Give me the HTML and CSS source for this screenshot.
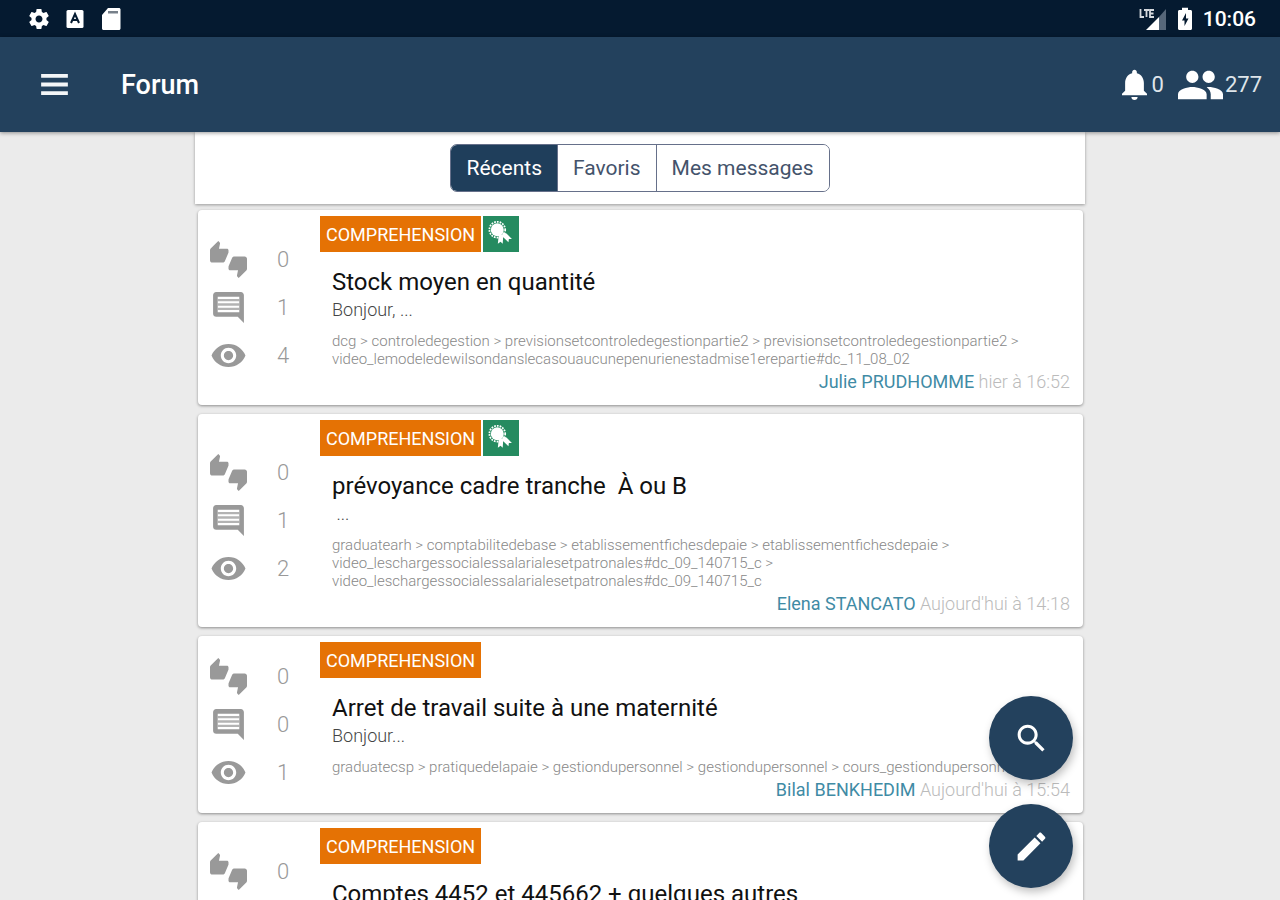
FILE: index.html
```html
<!DOCTYPE html>
<html lang="fr">
<head>
<meta charset="utf-8">
<meta name="viewport" content="width=device-width, initial-scale=1">
<title>Forum</title>
<link rel="stylesheet" href="styles.css">
</head>
<body>
<svg class="sprite" aria-hidden="true">
  <symbol id="thumbs" viewBox="0 0 24 24"><path d="M12 6c0-.55-.45-1-1-1H5.820l.66-3.180.02-.23c0-.31-.13-.59-.33-.8L5.380 0 .44 4.940C.17 5.210 0 5.590 0 6v6.500c0 .83.67 1.500 1.500 1.500h6.750c.62 0 1.150-.38 1.380-.91l2.260-5.290c.07-.17.11-.36.11-.55V6zm10.500 4h-6.750c-.62 0-1.150.38-1.380.91l-2.260 5.290c-.07.17-.11.36-.11.55V18c0 .55.45 1 1 1h5.180l-.66 3.180-.02.24c0 .31.13.59.33.8l.79.78 4.940-4.940c.27-.27.44-.65.44-1.060v-6.500c0-.83-.67-1.500-1.500-1.500z"/></symbol>
  <symbol id="comment" viewBox="0 0 24 24"><path d="M21.990 4c0-1.100-.89-2-1.990-2H4c-1.100 0-2 .9-2 2v12c0 1.100.9 2 2 2h14l4 4-.01-18zM19 15H5V5h14z"/><path d="M5 6.500h14v1.500H5zM5 9.300h14v1.500H5zM5 12.100h14v1.500H5z" opacity=".75"/></symbol>
  <symbol id="eye" viewBox="0 0 24 24"><path d="M12 4.500C7 4.500 2.730 7.610 1 12c1.730 4.390 6 7.500 11 7.500s9.270-3.110 11-7.500c-1.730-4.390-6-7.500-11-7.500zM12 17c-2.760 0-5-2.240-5-5s2.240-5 5-5 5 2.240 5 5-2.240 5-5 5zm0-8c-1.660 0-3 1.340-3 3s1.340 3 3 3 3-1.340 3-3-1.340-3-3-3z"/></symbol>
  <symbol id="rosette" viewBox="0 0 24 24"><path d="M11 12.500l4 1.500-.5 8-2-2-2.500 2zM14 11l4 1.500 5 5-2.800.1-.4 2.900-5.300-5z"/><circle cx="9.500" cy="9" r="6"/><circle cx="9.500" cy="9" r="7.300" fill="none" stroke="#fff" stroke-width="1.600" stroke-dasharray="1.600 1"/></symbol>
</svg>
<div class="app">
  <div class="status">
    <div class="status-group">
      <svg class="icon-status" viewBox="0 0 24 24"><path d="M19.430 12.980c.04-.32.07-.64.07-.98s-.03-.66-.07-.98l2.110-1.650c.19-.15.24-.42.12-.64l-2-3.460c-.12-.22-.39-.3-.61-.22l-2.490 1c-.52-.4-1.080-.73-1.690-.98l-.38-2.650C14.460 2.180 14.250 2 14 2h-4c-.25 0-.46.18-.49.42l-.38 2.650c-.61.25-1.170.59-1.690.98l-2.490-1c-.23-.09-.49 0-.61.22l-2 3.460c-.13.22-.07.49.12.64l2.110 1.650c-.04.32-.07.65-.07.98s.03.66.07.98l-2.110 1.650c-.19.15-.24.42-.12.64l2 3.460c.12.22.39.3.61.22l2.490-1c.52.4 1.080.73 1.690.98l.38 2.650c.03.24.24.42.49.42h4c.25 0 .46-.18.49-.42l.38-2.650c.61-.25 1.170-.59 1.690-.98l2.490 1c.23.09.49 0 .61-.22l2-3.460c.12-.22.07-.49-.12-.64l-2.110-1.650zM12 15.500c-1.930 0-3.500-1.570-3.500-3.500s1.570-3.500 3.500-3.500 3.500 1.570 3.500 3.500-1.570 3.500-3.500 3.500z"/></svg>
      <svg class="icon-status" viewBox="0 0 24 24"><rect x="3.500" y="3" width="17" height="18" rx="1.500"/><path d="M8 16l4-9 4 9M9.500 13h5" fill="none" stroke="#051a30" stroke-width="2"/></svg>
      <svg class="icon-status" viewBox="0 0 24 24"><path d="M20 1H9L3 8v13.500c0 .8.700 1.500 1.500 1.500H20c.8 0 1.500-.7 1.500-1.500v-19C21.500 1.700 20.800 1 20 1z"/><path d="M9 4h10v2.500H9z" fill="#77808a"/></svg>
    </div>
    <div class="status-group status-right">
      <svg class="icon-signal" viewBox="0 0 28 24"><path d="M7 23L20 10v13z"/><path d="M20 10l7-8v21h-7z" fill="#56677a"/><path d="M1.500 2v8H5M5 3h5M7.500 3v7M15 3h-4v7h4M11 6.500h3.500" fill="none" stroke="#d5d9de" stroke-width="1.800"/></svg>
      <svg class="icon-status" viewBox="0 0 24 24"><path d="M17.500 3H15V.8H9V3H6.500C5.600 3 5 3.700 5 4.500v17c0 .8.600 1.500 1.500 1.500h11c.9 0 1.500-.7 1.500-1.500v-17c0-.8-.6-1.500-1.500-1.500z"/><path d="M13 6l-4 7.500h2.500V19l4-7.500H13z" fill="#051a30"/></svg>
      <span class="clock">10:06</span>
    </div>
  </div>
  <header class="appbar">
    <button class="menu" type="button" aria-label="Menu"><svg viewBox="0 0 28 22"><path d="M0 0h28v4H0zM0 9h28v4H0zM0 18h28v4H0z"/></svg></button>
    <h1 class="title">Forum</h1>
    <button class="counter alerts" type="button" aria-label="Notifications"><svg class="icon-bell" viewBox="4 2 16 20" preserveAspectRatio="none"><path d="M12 22c1.100 0 2-.9 2-2h-4c0 1.100.89 2 2 2zm6-6v-5c0-3.070-1.640-5.640-4.500-6.320V4c0-.83-.67-1.500-1.500-1.500s-1.500.67-1.500 1.500v.68C7.630 5.360 6 7.920 6 11v5l-2 2v1h16v-1l-2-2z"/></svg><span>0</span></button>
    <button class="counter" type="button" aria-label="Membres"><svg class="icon-group" viewBox="1 5 22 14"><path d="M16 11c1.660 0 2.990-1.340 2.990-3S17.660 5 16 5c-1.660 0-3 1.340-3 3s1.340 3 3 3zm-8 0c1.660 0 2.990-1.340 2.990-3S9.660 5 8 5C6.340 5 5 6.340 5 8s1.340 3 3 3zm0 2c-2.330 0-7 1.170-7 3.500V19h14v-2.500c0-2.330-4.670-3.500-7-3.500zm8 0c-.29 0-.62.02-.97.05 1.160.84 1.970 1.970 1.970 3.450V19h6v-2.500c0-2.330-4.670-3.500-7-3.500z"/></svg><span>277</span></button>
  </header>
  <main class="content">
    <div class="column">
      <nav class="filters">
        <div class="segments">
          <button class="segment active" type="button">Récents</button>
          <button class="segment" type="button">Favoris</button>
          <button class="segment" type="button">Mes messages</button>
        </div>
      </nav>
      <div class="cards">
        <article class="card">
          <ul class="stats">
            <li><svg class="icon-stat"><use href="#thumbs"/></svg><span>0</span></li>
            <li><svg class="icon-stat"><use href="#comment"/></svg><span>1</span></li>
            <li><svg class="icon-stat"><use href="#eye"/></svg><span>4</span></li>
          </ul>
          <div class="post">
            <div class="tags"><span class="tag">COMPREHENSION</span><span class="badge"><svg><use href="#rosette"/></svg></span></div>
            <h2 class="subject">Stock moyen en quantité</h2>
            <p class="excerpt">Bonjour, ...</p>
            <p class="path">dcg &gt; controledegestion &gt; previsionsetcontroledegestionpartie2 &gt; previsionsetcontroledegestionpartie2 &gt; video_lemodeledewilsondanslecasouaucunepenurienestadmise1erepartie#dc_11_08_02</p>
            <p class="byline"><a href="#">Julie PRUDHOMME</a> hier à 16:52</p>
          </div>
        </article>
        <article class="card">
          <ul class="stats">
            <li><svg class="icon-stat"><use href="#thumbs"/></svg><span>0</span></li>
            <li><svg class="icon-stat"><use href="#comment"/></svg><span>1</span></li>
            <li><svg class="icon-stat"><use href="#eye"/></svg><span>2</span></li>
          </ul>
          <div class="post">
            <div class="tags"><span class="tag">COMPREHENSION</span><span class="badge"><svg><use href="#rosette"/></svg></span></div>
            <h2 class="subject">prévoyance cadre tranche &nbsp;À ou B</h2>
            <p class="excerpt">&nbsp;...</p>
            <p class="path">graduatearh &gt; comptabilitedebase &gt; etablissementfichesdepaie &gt; etablissementfichesdepaie &gt; video_leschargessocialessalarialesetpatronales#dc_09_140715_c &gt; video_leschargessocialessalarialesetpatronales#dc_09_140715_c</p>
            <p class="byline"><a href="#">Elena STANCATO</a> Aujourd'hui à 14:18</p>
          </div>
        </article>
        <article class="card">
          <ul class="stats">
            <li><svg class="icon-stat"><use href="#thumbs"/></svg><span>0</span></li>
            <li><svg class="icon-stat"><use href="#comment"/></svg><span>0</span></li>
            <li><svg class="icon-stat"><use href="#eye"/></svg><span>1</span></li>
          </ul>
          <div class="post">
            <div class="tags"><span class="tag">COMPREHENSION</span></div>
            <h2 class="subject">Arret de travail suite à une maternité</h2>
            <p class="excerpt">Bonjour...</p>
            <p class="path">graduatecsp &gt; pratiquedelapaie &gt; gestiondupersonnel &gt; gestiondupersonnel &gt; cours_gestiondupersonnel</p>
            <p class="byline"><a href="#">Bilal BENKHEDIM</a> Aujourd'hui à 15:54</p>
          </div>
        </article>
        <article class="card tall">
          <ul class="stats">
            <li><svg class="icon-stat"><use href="#thumbs"/></svg><span>0</span></li>
            <li><svg class="icon-stat"><use href="#comment"/></svg></li>
            <li><svg class="icon-stat"><use href="#eye"/></svg></li>
          </ul>
          <div class="post">
            <div class="tags"><span class="tag">COMPREHENSION</span></div>
            <h2 class="subject">Comptes 4452 et 445662 + quelques autres</h2>
          </div>
        </article>
      </div>
    </div>
  </main>
  <div class="fabs">
    <button class="fab" type="button" aria-label="Rechercher"><svg viewBox="0 0 24 24"><path d="M15.500 14h-.79l-.28-.27C15.410 12.590 16 11.110 16 9.500 16 5.910 13.090 3 9.500 3S3 5.910 3 9.500 5.910 16 9.500 16c1.610 0 3.090-.59 4.230-1.570l.27.28v.79l5 4.990L20.490 19l-4.990-5zm-6 0C7.010 14 5 11.990 5 9.500S7.010 5 9.500 5 14 7.010 14 9.500 11.990 14 9.500 14z"/></svg></button>
    <button class="fab" type="button" aria-label="Écrire"><svg viewBox="0 0 24 24"><path d="M3 17.250V21h3.750L17.810 9.940l-3.750-3.750L3 17.250zM20.710 7.040c.39-.39.39-1.020 0-1.410l-2.340-2.340c-.39-.39-1.020-.39-1.410 0l-1.830 1.830 3.750 3.750 1.830-1.830z"/></svg></button>
  </div>
</div>
</body>
</html>
```

FILE: styles.css
```css
* { box-sizing: border-box; }

body {
  margin: 0;
  background: #ebebeb;
  font-family: Roboto, "Liberation Sans", sans-serif;
  color: #111;
}

h1, h2, p, ul { margin: 0; padding: 0; font-weight: 400; }
button { font: inherit; border: 0; padding: 0; cursor: pointer; }
svg { display: block; fill: currentColor; flex: none; }
.sprite { display: none; }

.app { display: flex; flex-direction: column; height: 100vh; overflow: hidden; }

.status {
  display: flex;
  justify-content: space-between;
  align-items: center;
  flex: none;
  height: 37px;
  padding: 0 24px 0 27px;
  background: #051a30;
  color: #fff;
}
.status-group { display: flex; align-items: center; gap: 12px; }
.status-right { gap: 6px; }
.icon-status { width: 24px; height: 24px; }
.icon-signal { width: 28px; height: 24px; }
.clock { font-size: 21px; font-weight: 500; line-height: 24px; }

.appbar {
  position: relative;
  z-index: 1;
  display: flex;
  align-items: center;
  flex: none;
  gap: 14px;
  height: 95px;
  padding: 0 18px 0 40px;
  background: #23415d;
  color: #fff;
  box-shadow: 0 1px 4px rgba(0, 0, 0, .4);
}
.menu { background: none; color: #f4f6f8; }
.menu svg { width: 29px; height: 21px; }
.title { flex: 1; margin-left: 38px; font-size: 27px; font-weight: 500; line-height: 32px; }
.counter { display: flex; align-items: center; gap: 2px; background: none; color: #fff; font-size: 22px; line-height: 28px; }
.counter.alerts { gap: 5px; }
.counter span { color: #dfe5ea; }
.icon-bell { width: 25px; height: 31px; }
.icon-group { width: 45px; height: 30px; }

.content { flex: 1; min-height: 0; overflow: hidden; }
.column { max-width: 890px; margin: 0 auto; }

.filters {
  display: flex;
  justify-content: center;
  padding: 12px 16px;
  background: #fff;
  box-shadow: 0 1px 3px rgba(0, 0, 0, .35);
}
.segments {
  display: flex;
  overflow: hidden;
  border: 1px solid #66708a;
  border-radius: 7px;
}
.segment {
  height: 46px;
  padding: 0 15px;
  background: #fff;
  color: #44536b;
  font-size: 21px;
}
.segment + .segment { border-left: 1px solid #66708a; }
.segment.active { background: #1f3e5b; color: #fff; }

.cards { display: flex; flex-direction: column; gap: 9px; padding: 6px 2px 9px 3px; }
.card {
  display: flex;
  background: #fff;
  border-radius: 4px;
  box-shadow: 0 1px 3px rgba(0, 0, 0, .4);
}
.card.tall { min-height: 194px; }

.stats {
  display: flex;
  flex-direction: column;
  justify-content: center;
  flex: none;
  width: 122px;
  padding-left: 12px;
  list-style: none;
  color: #999;
  font-size: 22px;
  font-weight: 300;
}
.stats li { display: flex; align-items: center; height: 48px; }
.stats span { width: 36px; margin-left: 18px; text-align: center; }
.icon-stat { width: 37px; height: 37px; }

.post { flex: 1; min-width: 0; padding: 6px 13px 11px 0; }
.tags { display: flex; gap: 2px; margin-bottom: 15px; }
.tag {
  padding: 1px 6px 0;
  background: #e57204;
  color: #fff;
  font-size: 18px;
  line-height: 35px;
}
.badge { padding: 4px 6px 6px 4px; background: #258b60; color: #fff; }
.badge svg { width: 26px; height: 26px; }
.subject, .excerpt, .path { padding-left: 12px; }
.subject { font-size: 24px; line-height: 30px; }
.excerpt { color: #444; font-size: 18px; font-weight: 300; line-height: 26px; }
.path { margin: 9px 0 2px; color: #888; font-size: 15px; font-weight: 300; line-height: 18px; }
.byline { color: #bbb; font-size: 18px; font-weight: 300; line-height: 24px; text-align: right; }
.byline a { color: #3f8ba5; font-weight: 400; text-decoration: none; }

/* Floating actions, aligned with the right edge of the column */
.fabs {
  position: fixed;
  right: calc(50% - 433px);
  bottom: 12px;
  z-index: 2;
  display: grid;
  gap: 24px;
}
.fab {
  display: grid;
  place-items: center;
  width: 84px;
  height: 84px;
  border-radius: 50%;
  background: #23415d;
  color: #fff;
  box-shadow: 2px 4px 8px rgba(0, 0, 0, .25);
}
.fab svg { width: 37px; height: 37px; }
```
